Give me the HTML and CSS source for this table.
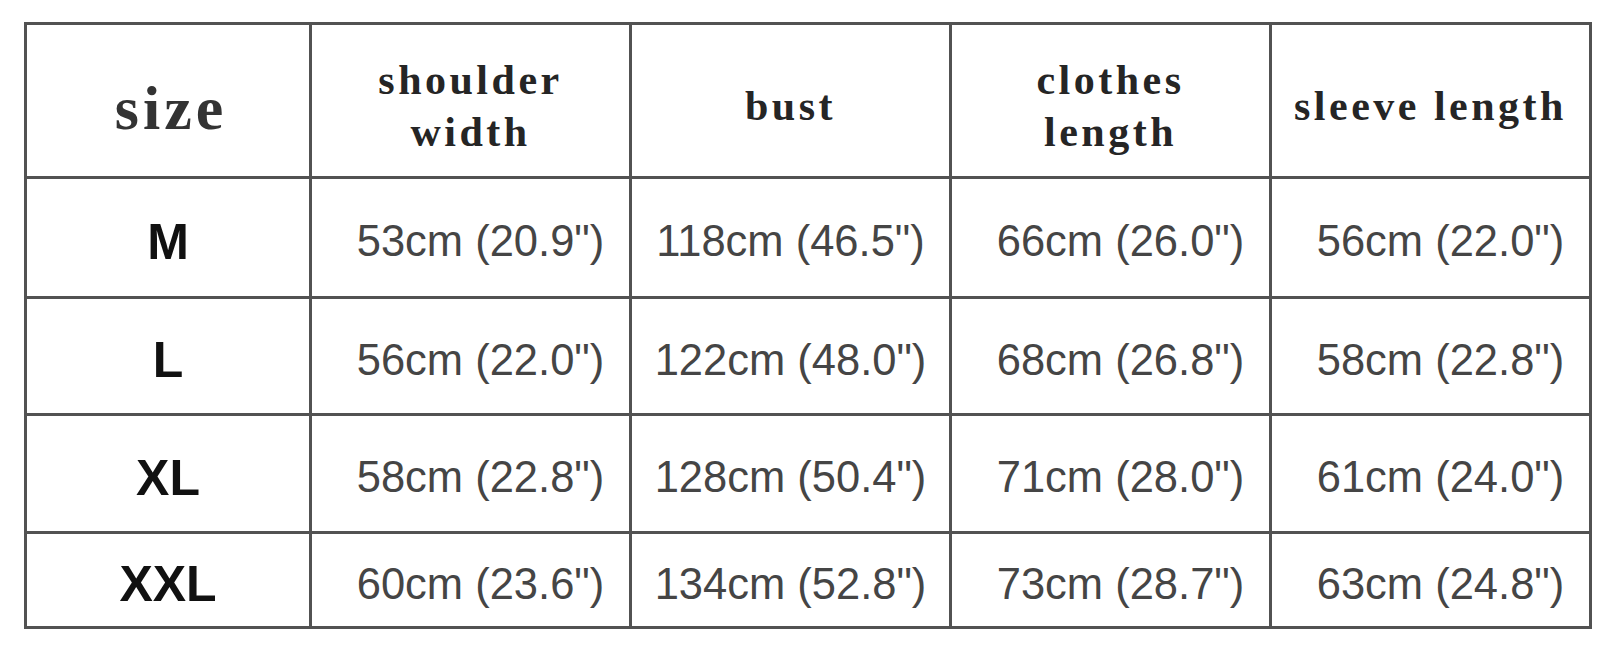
FILE: index.html
```html
<!DOCTYPE html>
<html lang="en">
<head>
<meta charset="utf-8">
<title>Size chart</title>
<link rel="stylesheet" href="styles.css">
</head>
<body>
<div class="chart">
  <div class="cell hd big">size</div>
  <div class="cell hd">shoulder<br>width</div>
  <div class="cell hd">bust</div>
  <div class="cell hd">clothes<br>length</div>
  <div class="cell hd">sleeve length</div>

  <div class="cell sz">M</div>
  <div class="cell val shift">53cm (20.9")</div>
  <div class="cell val">118cm (46.5")</div>
  <div class="cell val shift">66cm (26.0")</div>
  <div class="cell val shift">56cm (22.0")</div>

  <div class="cell sz">L</div>
  <div class="cell val shift">56cm (22.0")</div>
  <div class="cell val">122cm (48.0")</div>
  <div class="cell val shift">68cm (26.8")</div>
  <div class="cell val shift">58cm (22.8")</div>

  <div class="cell sz">XL</div>
  <div class="cell val shift">58cm (22.8")</div>
  <div class="cell val">128cm (50.4")</div>
  <div class="cell val shift">71cm (28.0")</div>
  <div class="cell val shift">61cm (24.0")</div>

  <div class="cell sz">XXL</div>
  <div class="cell val shift">60cm (23.6")</div>
  <div class="cell val">134cm (52.8")</div>
  <div class="cell val shift">73cm (28.7")</div>
  <div class="cell val shift">63cm (24.8")</div>
</div>
</body>
</html>
```

FILE: styles.css
```css
html, body {
  margin: 0;
  padding: 0;
  background: #ffffff;
}

body {
  width: 1600px;
  height: 658px;
  overflow: hidden;
  padding-top: 22px;
  padding-left: 24px;
  box-sizing: border-box;
}

.chart {
  display: grid;
  grid-template-columns: 282px 317px 317px 317px 317px;
  grid-template-rows: 151px 117px 114px 115px 92px;
  gap: 3px;
  padding: 3px;
  width: max-content;
  background: #525252;
}

.cell {
  background: #ffffff;
  display: flex;
  align-items: center;
  justify-content: center;
  text-align: center;
  white-space: nowrap;
  box-sizing: border-box;
  padding-top: 8px;
}

.hd {
  font-family: "Liberation Serif", "DejaVu Serif", serif;
  font-weight: bold;
  font-size: 42px;
  line-height: 52px;
  letter-spacing: 3.5px;
  color: #252525;
  padding-top: 10px;
}

.hd.big {
  font-size: 62px;
  letter-spacing: 4px;
  color: #333333;
  padding-top: 14px;
  padding-left: 6px;
}

.sz {
  font-family: "Liberation Sans", Arial, sans-serif;
  font-weight: bold;
  font-size: 50px;
  color: #111111;
}

.val {
  font-family: "Liberation Sans", Arial, sans-serif;
  font-size: 43.5px;
  color: #454545;
}

.val.shift {
  padding-left: 20px;
}
```
